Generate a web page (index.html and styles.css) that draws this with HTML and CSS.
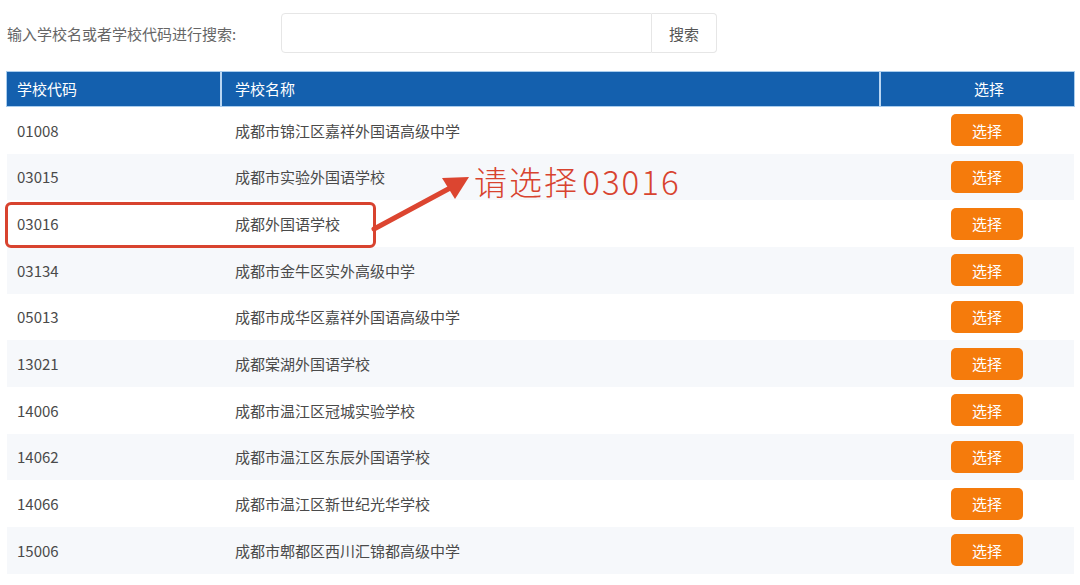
FILE: index.html
```html
<!DOCTYPE html>
<html>
<head>
    <meta charset="utf-8">
    <title>选择学校</title>
    <link rel="stylesheet" href="styles.css">
</head>
<body>
    <div class="page">
        <div class="search">
            <label class="search-label">输入学校名或者学校代码进行搜索:</label>
            <input class="search-input" type="text">
            <button class="search-btn">搜索</button>
        </div>

        <div class="school-table">
            <div class="row head">
                <div class="cell code">学校代码</div>
                <div class="cell name">学校名称</div>
                <div class="cell pick">选择</div>
            </div>
            <div class="row"><div class="cell code">01008</div><div class="cell name">成都市锦江区嘉祥外国语高级中学</div><div class="cell pick"><button class="pick-btn">选择</button></div></div>
            <div class="row alt"><div class="cell code">03015</div><div class="cell name">成都市实验外国语学校</div><div class="cell pick"><button class="pick-btn">选择</button></div></div>
            <div class="row"><div class="cell code">03016</div><div class="cell name">成都外国语学校</div><div class="cell pick"><button class="pick-btn">选择</button></div></div>
            <div class="row alt"><div class="cell code">03134</div><div class="cell name">成都市金牛区实外高级中学</div><div class="cell pick"><button class="pick-btn">选择</button></div></div>
            <div class="row"><div class="cell code">05013</div><div class="cell name">成都市成华区嘉祥外国语高级中学</div><div class="cell pick"><button class="pick-btn">选择</button></div></div>
            <div class="row alt"><div class="cell code">13021</div><div class="cell name">成都棠湖外国语学校</div><div class="cell pick"><button class="pick-btn">选择</button></div></div>
            <div class="row"><div class="cell code">14006</div><div class="cell name">成都市温江区冠城实验学校</div><div class="cell pick"><button class="pick-btn">选择</button></div></div>
            <div class="row alt"><div class="cell code">14062</div><div class="cell name">成都市温江区东辰外国语学校</div><div class="cell pick"><button class="pick-btn">选择</button></div></div>
            <div class="row"><div class="cell code">14066</div><div class="cell name">成都市温江区新世纪光华学校</div><div class="cell pick"><button class="pick-btn">选择</button></div></div>
            <div class="row alt"><div class="cell code">15006</div><div class="cell name">成都市郫都区西川汇锦都高级中学</div><div class="cell pick"><button class="pick-btn">选择</button></div></div>
        </div>
    </div>

    <!-- annotation drawn over the screenshot -->
    <div class="mark-box"></div>
    <svg class="mark-arrow" width="1080" height="585" viewBox="0 0 1080 585">
        <line x1="374" y1="229" x2="452" y2="187" stroke="#dc4530" stroke-width="5" stroke-linecap="round"/>
        <polygon points="469,177 455,199 442,178" fill="#dc4530"/>
    </svg>
    <div class="mark-text">请选择 03016</div>
</body>
</html>
```

FILE: styles.css
```css
body {
    margin: 0;
    background: #fff;
    font-family: "Noto Sans CJK SC", "Noto Sans", sans-serif;
    color: #555;
    overflow: hidden;
}
.page {
    padding: 13px 6px 0 7px;
}
.search {
    display: flex;
    align-items: center;
    height: 40px;
}
.search-label {
    font-size: 15px;
    color: #666;
    width: 274px;
}
.search-input {
    box-sizing: border-box;
    width: 371px;
    height: 40px;
    border: 1px solid #e6e6e6;
    border-radius: 4px 0 0 4px;
    outline: none;
}
.search-btn {
    box-sizing: border-box;
    width: 65px;
    height: 40px;
    border: 1px solid #e6e6e6;
    border-left: none;
    border-radius: 0 4px 4px 0;
    background: #fff;
    font-family: inherit;
    font-size: 15px;
    color: #555;
}
.school-table {
    margin-top: 19px;
}
.row {
    display: grid;
    grid-template-columns: 213px 657px 1fr;
    align-items: center;
    height: 46.67px;
    font-size: 15px;
    color: #4a4a4a;
}
.row.alt {
    background: #f6f8fb;
}
.row.head {
    height: 34px;
    background: #b9d6f2;
    color: #fff;
    column-gap: 2px;
    box-shadow: 0 0 0 1px #a9cdee;
}
.row.head .cell {
    background: #1460ae;
    height: 34px;
    line-height: 34px;
}
.row.head + .row {
    margin-top: 1px;
}
.cell.code {
    padding-left: 10px;
}
.cell.name {
    padding-left: 15px;
}
.row.head .cell.name {
    padding-left: 13px;
}
.cell.pick {
    text-align: center;
    padding-left: 23px;
}
.pick-btn {
    width: 72px;
    height: 32px;
    border: none;
    border-radius: 5px;
    background: #f57b0c;
    color: #fff;
    font-family: inherit;
    font-size: 15px;
}
.mark-box {
    position: absolute;
    left: 5px;
    top: 202px;
    width: 365px;
    height: 40px;
    border: 3px solid #d8432f;
    border-radius: 6px;
}
.mark-arrow {
    position: absolute;
    left: 0;
    top: 0;
    pointer-events: none;
}
.mark-text {
    position: absolute;
    left: 474px;
    top: 159px;
    font-size: 33px;
    font-weight: 300;
    line-height: 44px;
    letter-spacing: 2px;
    word-spacing: -6px;
    color: #d8432f;
}
```
